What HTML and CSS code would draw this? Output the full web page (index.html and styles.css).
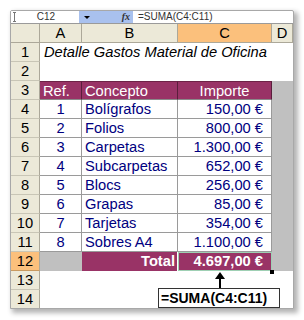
FILE: index.html
```html
<!DOCTYPE html>
<html>
<head>
<meta charset="utf-8">
<link rel="stylesheet" href="styles.css">
</head>
<body>
<div class="frame">
  <div class="fbar">
    <div class="namebox"><span class="ibeam"></span><span class="ref">C12</span></div>
    <div class="drop"><span class="tri"></span><span class="fx">fx</span></div>
    <div class="formula">=SUMA(C4:C11)</div>
  </div>
  <div class="sheet">
    <div class="ch corner"></div><div class="ch">A</div><div class="ch">B</div><div class="ch sel">C</div><div class="ch">D</div>

    <div class="rh">1</div><div class="c title">Detalle Gastos Material de Oficina</div><div class="c"></div><div class="c"></div><div class="c"></div>
    <div class="rh">2</div><div class="c"></div><div class="c"></div><div class="c"></div><div class="c"></div>
    <div class="rh">3</div><div class="hd">Ref.</div><div class="hd">Concepto</div><div class="hd ctr">Importe</div><div class="sh"></div>

    <div class="rh">4</div><div class="d ctr">1</div><div class="d">Bolígrafos</div><div class="d num">150,00 €</div><div class="sh"></div>
    <div class="rh">5</div><div class="d ctr">2</div><div class="d">Folios</div><div class="d num">800,00 €</div><div class="sh"></div>
    <div class="rh">6</div><div class="d ctr">3</div><div class="d">Carpetas</div><div class="d num">1.300,00 €</div><div class="sh"></div>
    <div class="rh">7</div><div class="d ctr">4</div><div class="d">Subcarpetas</div><div class="d num">652,00 €</div><div class="sh"></div>
    <div class="rh">8</div><div class="d ctr">5</div><div class="d">Blocs</div><div class="d num">256,00 €</div><div class="sh"></div>
    <div class="rh">9</div><div class="d ctr">6</div><div class="d">Grapas</div><div class="d num">85,00 €</div><div class="sh"></div>
    <div class="rh">10</div><div class="d ctr">7</div><div class="d">Tarjetas</div><div class="d num">354,00 €</div><div class="sh"></div>
    <div class="rh">11</div><div class="d ctr">8</div><div class="d">Sobres A4</div><div class="d num">1.100,00 €</div><div class="sh"></div>

    <div class="rh sel">12</div><div class="sh"></div><div class="tl">Total</div><div class="tv">4.697,00 €</div><div class="sh"></div>
    <div class="rh">13</div><div class="c"></div><div class="c"></div><div class="c"></div><div class="c"></div>
    <div class="rh">14</div><div class="c"></div><div class="c"></div><div class="c"></div><div class="c"></div>
  </div>
  <div class="handle"></div>
  <svg class="arrow" width="10" height="16" viewBox="0 0 10 16"><polygon points="5,0 0,7 10,7" fill="#000"/><rect x="4" y="6" width="2" height="10" fill="#000"/></svg>
  <div class="callout">=SUMA(C4:C11)</div>
</div>
</body>
</html>
```
FILE: styles.css
```css
html, body {
  margin: 0;
  padding: 0;
  background: #fff;
}
body {
  width: 304px;
  height: 320px;
  overflow: hidden;
  font-family: "Liberation Sans", Arial, sans-serif;
}
.frame {
  position: relative;
  margin: 10px 0 0 10px;
  width: 282px;
  height: 297px;
  border: 1px solid #a8a8a8;
  border-radius: 2px 2px 0 0;
  background: #fff;
  overflow: hidden;
  box-shadow: 3px 3px 5px 1px rgba(0, 0, 0, 0.3);
}
.fbar {
  display: flex;
  height: 13px;
  border-bottom: 1px solid #9a9a9a;
  box-sizing: border-box;
  font-size: 10px;
  line-height: 12px;
  color: #333;
}
.namebox {
  position: relative;
  width: 68px;
  background: #fff;
  display: flex;
  justify-content: center;
}
.ibeam {
  position: absolute;
  left: 2px;
  top: 1px;
  width: 3px;
  height: 10px;
  border-top: 1px solid #777;
  border-bottom: 1px solid #777;
  box-sizing: border-box;
}
.ibeam::after {
  content: "";
  position: absolute;
  left: 1px;
  top: 0;
  width: 1px;
  height: 8px;
  background: #777;
}
.ref {
  padding-left: 2px;
}
.drop {
  width: 54px;
  background: #a9c1ee;
  display: flex;
  align-items: center;
  justify-content: space-between;
  padding: 0 3px 0 5px;
  box-sizing: border-box;
}
.tri {
  width: 0;
  height: 0;
  border-left: 3px solid transparent;
  border-right: 3px solid transparent;
  border-top: 3px solid #000;
}
.fx {
  font-family: "Liberation Serif", serif;
  font-style: italic;
  font-weight: bold;
  font-size: 10px;
}
.formula {
  flex: 1;
  padding-left: 5px;
}
.sheet {
  display: grid;
  grid-template-columns: 29px 42px 96px 94px 21px;
  grid-auto-rows: 19px;
  font-size: 14.7px;
  line-height: 19px;
}
.sheet > div {
  box-sizing: border-box;
  white-space: nowrap;
}
.ch {
  background: #ece9d8;
  border-right: 1px solid #aca899;
  border-bottom: 1px solid #aca899;
  text-align: center;
  color: #000;
  line-height: 18px;
}
.rh {
  background: #ece9d8;
  border-right: 1px solid #aca899;
  border-bottom: 1px solid #c9c6b6;
  text-align: center;
  color: #000;
}
.sel {
  background: #fbc07c;
}
.rh.sel {
  border-bottom-color: #c99a60;
}
.c {
  background: transparent;
}
.title {
  font-style: italic;
  padding-left: 4px;
  color: #000;
  overflow: visible;
}
.hd {
  background: #993366;
  color: #fff;
  padding-left: 3px;
  border-right: 1px solid #5a1e3c;
  border-top: 1px solid #6d2347;
  border-bottom: 1px solid #8a8a8a;
}
.hd.ctr {
  padding-left: 0;
}
.d {
  background: #fff;
  color: #000080;
  padding-left: 3px;
  border-right: 1px solid #9a9a9a;
  border-bottom: 1px solid #9a9a9a;
}
.ctr {
  text-align: center;
}
.d.ctr {
  padding-left: 0;
}
.num {
  text-align: right;
  padding-right: 8px;
}
.sh {
  background: #c0c0c0;
}
.tl {
  background: #993366;
  color: #fff;
  font-weight: bold;
  text-align: right;
  padding-right: 2px;
  border-right: 1px solid #fff;
}
.tv {
  background: #993366;
  color: #fff;
  font-weight: bold;
  text-align: right;
  padding-right: 8px;
  border: 1px solid #9fd0b4;
  line-height: 17px;
}
.handle {
  position: absolute;
  left: 259px;
  top: 259px;
  width: 4px;
  height: 4px;
  background: #000;
}
.arrow {
  position: absolute;
  left: 204px;
  top: 261px;
}
.callout {
  position: absolute;
  left: 147px;
  top: 277px;
  width: 122px;
  height: 20px;
  box-sizing: border-box;
  border: 1px solid #333;
  background: #fff;
  font-weight: bold;
  font-size: 14px;
  line-height: 18px;
  padding-left: 2px;
  color: #000;
}
```
